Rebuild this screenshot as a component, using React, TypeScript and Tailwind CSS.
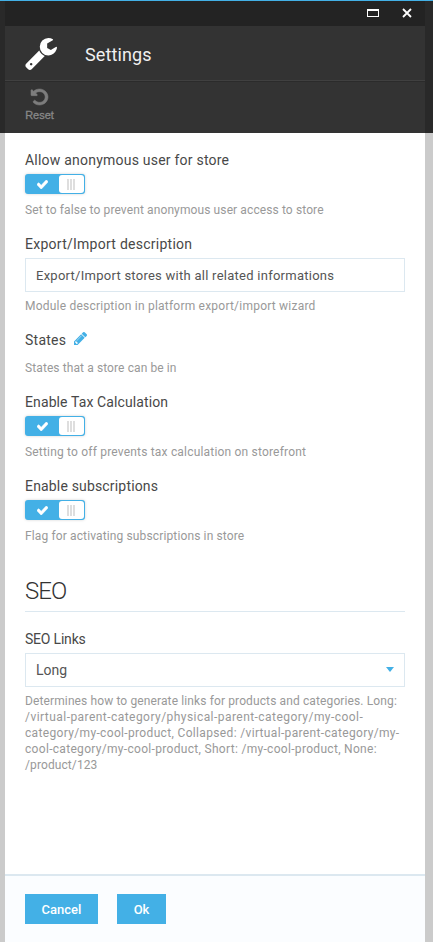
import type { ReactNode } from "react";

function Wrench() {
  return (
    <svg className="mt-[2px] h-8 w-8 overflow-visible" viewBox="0 128 1664 1644" preserveAspectRatio="none" fill="#fff">
      <path d="M384 1472q0-26-19-45t-45-19-45 19-19 45 19 45 45 19 45-19 19-45zm644-420l-682 682q-37 37-90 37-52 0-91-37l-106-108q-38-36-38-90 0-53 38-91l681-681q39 98 114.5 173.5t173.5 114.5zm634-435q0 39-23 106-47 134-164.5 217.5t-258.5 83.5q-185 0-316.5-131.5t-131.5-316.5 131.5-316.5 316.5-131.5q58 0 121.5 16.5t107.5 46.5q16 11 16 28t-16 28l-293 169v224l193 107q5-3 79-48.5t135.5-81 70.5-35.5q15 0 23.5 10t8.5 25z" />
    </svg>
  );
}

function Undo() {
  return (
    <svg className="h-4 w-[17px] overflow-visible" viewBox="128 128 1536 1536" preserveAspectRatio="none" fill="#7d7d7d" stroke="#7d7d7d" strokeWidth="50">
      <path d="M1664 896q0 156-61 298t-164 245-245 164-298 61q-172 0-327-72.5t-264-204.5q-7-10-6.5-22.5t8.5-20.5l137-138q10-9 25-9 16 2 23 12 73 95 179 147t225 52q104 0 198.5-40.5t163.5-109.5 109.5-163.5 40.5-198.5-40.5-198.5-109.5-163.5-163.5-109.5-198.5-40.5q-98 0-188 35.5t-160 101.5l137 138q31 30 14 69-17 40-59 40h-448q-26 0-45-19t-19-45v-448q0-42 40-59 39-17 69 14l130 129q107-101 244.5-156.5t284.5-55.5q156 0 298 61t245 164 164 245 61 298z" />
    </svg>
  );
}

function Pencil() {
  return (
    <svg className="mt-[2px] ml-2 h-[13px] w-[13px]" viewBox="128 149 1515 1515" preserveAspectRatio="none" fill="#43b0e6">
      <path d="M491 1536l91-91-235-235-91 91v107h128v128h107zm523-928q0-22-22-22-10 0-17 7l-542 542q-7 7-7 17 0 22 22 22 10 0 17-7l542-542q7-7 7-17zm-54-192l416 416-832 832h-416v-416zm683 96q0 53-37 90l-166 166-416-416 166-165q36-38 90-38 53 0 91 38l235 234q37 39 37 91z" />
    </svg>
  );
}

function Toggle() {
  return (
    <div className="mt-1 flex h-5 w-[60px] rounded-[3px] bg-[#43b0e6] p-px shadow-[0_0_3px_rgba(0,0,0,0.18)]">
      <div className="flex w-[33px] items-center justify-center">
        <svg className="h-[9px] w-[11px]" viewBox="121 334 1550 1188" preserveAspectRatio="none" fill="#fff" stroke="#fff" strokeWidth="60">
          <path d="M1671 566q0 40-28 68l-724 724-136 136q-28 28-68 28t-68-28l-136-136-362-362q-28-28-28-68t28-68l136-136q28-28 68-28t68 28l294 295 656-657q28-28 68-28t68 28l136 136q28 28 28 68z" />
        </svg>
      </div>
      <div className="flex h-[18px] w-[25px] items-center justify-center gap-px rounded-[3px] bg-white pr-px">
        <i className="h-[11px] w-[2px] bg-[#dedede]" />
        <i className="h-[11px] w-[2px] bg-[#dedede]" />
        <i className="h-[11px] w-[2px] bg-[#dedede]" />
      </div>
    </div>
  );
}

function Label({ children, track }: { children: ReactNode; track: string }) {
  return <div className="flex h-5 text-sm leading-5 whitespace-nowrap text-[#484848]"><span className={track}>{children}</span></div>;
}

function Note({ children, track }: { children: ReactNode; track: string }) {
  return <div className="text-xs leading-4 whitespace-nowrap text-[#999]"><span className={track}>{children}</span></div>;
}

export default function App() {
  return (
    <div className="flex h-[942px] w-[433px] flex-col overflow-hidden border-t border-[#43b0e6] bg-[linear-gradient(#292929_132px,#cbcbcb_132px)] pr-2 pl-[5px] font-[Roboto,sans-serif]">
      <div className="flex h-[25px] shrink-0 justify-end bg-[#232323]">
        <i className="mt-2 mr-[23px] h-2 w-3 border border-t-2 border-white" />
        <svg className="mt-[7px] mr-[13px] h-[10px] w-[10px]" viewBox="0 0 10 10" stroke="#fff" strokeWidth="1.8">
          <path d="M1 1l8 8M9 1L1 9" />
        </svg>
      </div>
      <header className="flex h-[54px] shrink-0 items-center bg-[#333] pl-5">
        <Wrench />
        <h1 className="mt-1 ml-7 text-lg leading-6 font-normal text-[#f0f0f0]"><span className="tracking-[0.1px]">Settings</span></h1>
      </header>
      <div className="h-[53px] shrink-0 border-t border-[#404040] bg-[#333] pl-5 shadow-[inset_0_1px_#2b2b2b]">
        <div className="flex w-[29px] flex-col items-center pt-2">
          <Undo />
          <span className="mt-[2px] font-['Liberation_Sans',Arial,sans-serif] text-[11px] leading-4 text-[#888] [-webkit-text-stroke:0.3px_#888]">Reset</span>
        </div>
      </div>
      <main className="flex h-[741px] shrink-0 flex-col bg-white px-5 pt-[17px]">
        <Label track="tracking-[0.22px]">Allow anonymous user for store</Label>
        <Toggle />
        <div className="mt-2"><Note track="tracking-[0.11px]">Set to false to prevent anonymous user access to store</Note></div>
        <div className="mt-4"><Label track="tracking-[0.26px]">Export/Import description</Label></div>
        <div className="mt-1 flex h-[34px] items-center border border-[#dce8f0] pt-px pl-[10px] text-[13px] whitespace-nowrap text-[#555]"><span className="tracking-[0.26px]">Export/Import stores with all related informations</span></div>
        <div className="mt-[6px]"><Note track="tracking-[0.22px]">Module description in platform export/import wizard</Note></div>
        <div className="mt-4 flex"><Label track="tracking-[0.25px]">States</Label><Pencil /></div>
        <div className="mt-[10px]"><Note track="tracking-[0.1px]">States that a store can be in</Note></div>
        <div className="mt-4"><Label track="tracking-[0.11px]">Enable Tax Calculation</Label></div>
        <Toggle />
        <div className="mt-2"><Note track="tracking-[0.19px]">Setting to off prevents tax calculation on storefront</Note></div>
        <div className="mt-4"><Label track="tracking-[0.17px]">Enable subscriptions</Label></div>
        <Toggle />
        <div className="mt-2"><Note track="tracking-[0.13px]">Flag for activating subscriptions in store</Note></div>
        <h2 className="mt-8 h-9 border-b border-[#dce8f0] text-2xl leading-[30px] font-light text-[#333]"><span className="tracking-[-1px]">SEO</span></h2>
        <div className="mt-[17px]"><Label track="tracking-[-0.2px]">SEO Links</Label></div>
        <div className="mt-1 flex h-[34px] items-center justify-between border border-[#dce8f0] pr-[10px] pl-[10px] text-sm text-[#555]">
          <span>Long</span>
          <svg className="-mt-[2px] h-[5px] w-2" viewBox="0 0 8 5" fill="#43b0e6"><path d="M0 0h8L4 5z" /></svg>
        </div>
        <div className="mt-[6px]">
          <Note track="tracking-[0.12px]">Determines how to generate links for products and categories. Long:</Note>
          <Note track="tracking-[0.45px]">/virtual-parent-category/physical-parent-category/my-cool-</Note>
          <Note track="tracking-[0.34px]">category/my-cool-product, Collapsed: /virtual-parent-category/my-</Note>
          <Note track="tracking-[0.31px]">cool-category/my-cool-product, Short: /my-cool-product, None:</Note>
          <Note track="tracking-[0.1px]">/product/123</Note>
        </div>
      </main>
      <footer className="flex h-[68px] shrink-0 gap-[19px] border-t-2 border-[#dce8f0] bg-[#fbfdff] px-5 pt-[18px] text-[13px] font-medium text-white">
        <button className="h-[30px] w-[73px] bg-[#43b0e6] pt-px">Cancel</button>
        <button className="h-[30px] w-[49px] bg-[#43b0e6] pt-px">Ok</button>
      </footer>
    </div>
  );
}
